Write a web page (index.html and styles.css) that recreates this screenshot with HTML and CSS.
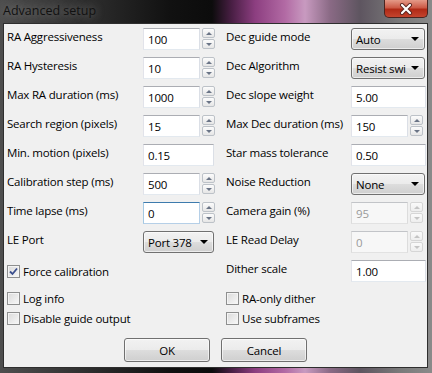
FILE: index.html
```html
<!DOCTYPE html>
<html lang="en">
<head>
    <meta charset="UTF-8">
    <title>Advanced setup</title>
    <link rel="stylesheet" href="styles.css">
</head>
<body>
    <div class="window">
        <div class="titlebar">
            <span class="title">Advanced setup</span>
            <div class="close-btn">
                <svg width="14" height="12" viewBox="0 0 14 12">
                    <path d="M3 2 L11 10 M11 2 L3 10" stroke="#5a2520" stroke-width="4" stroke-linecap="round"/>
                    <path d="M3 2 L11 10 M11 2 L3 10" stroke="#ffffff" stroke-width="2.2" stroke-linecap="round"/>
                </svg>
            </div>
        </div>
        <div class="client">
            <div class="form-grid">
                <label class="lbl">RA Aggressiveness</label>
                <div class="spin-field"><input class="textbox short" value="100"><span class="spinner"><span class="up"></span><span class="down"></span></span></div>
                <label class="lbl">Dec guide mode</label>
                <div class="combo"><span class="combo-text">Auto</span><span class="arrow"></span></div>

                <label class="lbl">RA Hysteresis</label>
                <div class="spin-field"><input class="textbox short" value="10"><span class="spinner"><span class="up"></span><span class="down"></span></span></div>
                <label class="lbl">Dec Algorithm</label>
                <div class="combo"><span class="combo-text">Resist swi</span><span class="arrow"></span></div>

                <label class="lbl">Max RA duration (ms)</label>
                <div class="spin-field"><input class="textbox short" value="1000"><span class="spinner"><span class="up"></span><span class="down"></span></span></div>
                <label class="lbl">Dec slope weight</label>
                <input class="textbox wide" value="5.00">

                <label class="lbl">Search region (pixels)</label>
                <div class="spin-field"><input class="textbox short" value="15"><span class="spinner"><span class="up"></span><span class="down"></span></span></div>
                <label class="lbl">Max Dec duration (ms)</label>
                <div class="spin-field"><input class="textbox short" value="150"><span class="spinner"><span class="up"></span><span class="down"></span></span></div>

                <label class="lbl">Min. motion (pixels)</label>
                <input class="textbox left-wide" value="0.15">
                <label class="lbl">Star mass tolerance</label>
                <input class="textbox wide" value="0.50">

                <label class="lbl">Calibration step (ms)</label>
                <div class="spin-field"><input class="textbox short" value="500"><span class="spinner"><span class="up"></span><span class="down"></span></span></div>
                <label class="lbl">Noise Reduction</label>
                <div class="combo"><span class="combo-text">None</span><span class="arrow"></span></div>

                <label class="lbl">Time lapse (ms)</label>
                <div class="spin-field"><input class="textbox short focused" value="0"><span class="spinner"><span class="up"></span><span class="down"></span></span></div>
                <label class="lbl">Camera gain (%)</label>
                <div class="spin-field"><input class="textbox short" value="95" disabled><span class="spinner disabled"><span class="up"></span><span class="down"></span></span></div>

                <label class="lbl">LE Port</label>
                <div class="combo left-combo"><span class="combo-text">Port 378</span><span class="arrow"></span></div>
                <label class="lbl">LE Read Delay</label>
                <div class="spin-field"><input class="textbox short" value="0" disabled><span class="spinner disabled"><span class="up"></span><span class="down"></span></span></div>

                <div class="check span2"><span class="box checked"><svg width="11" height="11" viewBox="0 0 11 11"><path d="M2 5.5 L4.5 8 L9 2.5" fill="none" stroke="#3b4f8e" stroke-width="1.8"/></svg></span>Force calibration</div>
                <label class="lbl">Dither scale</label>
                <input class="textbox wide" value="1.00">
            </div>

            <div class="check-grid">
                <div class="check span2"><span class="box"></span>Log info</div>
                <div class="check span2"><span class="box"></span>RA-only dither</div>
                <div class="check span2"><span class="box"></span>Disable guide output</div>
                <div class="check span2"><span class="box"></span>Use subframes</div>
            </div>

            <div class="buttons">
                <button class="btn">OK</button>
                <button class="btn">Cancel</button>
            </div>
        </div>
    </div>
</body>
</html>
```

FILE: styles.css
```css
body {
    margin: 0;
    width: 432px;
    height: 373px;
    overflow: hidden;
    font-family: "Open Sans", "Noto Sans", sans-serif;
    font-size: 11.5px;
    letter-spacing: -0.2px;
    color: #000;
    background: linear-gradient(to right, #4e4e4e 0px, #3c3c3c 50px, #262626 110px, #111 170px, #0c0c0c 212px, #4a1f45 232px, #8c3e80 255px, #b26aa4 285px, #c89ac0 305px, #8a6a85 330px, #5e5560 360px, #7a7a7a 400px, #8a8a8a 432px);
}
.window {
    display: flex;
    flex-direction: column;
    height: 373px;
    padding: 0 4px 5px 3px;
    box-sizing: border-box;
}
.titlebar {
    height: 23px;
    display: flex;
    justify-content: space-between;
    align-items: flex-start;
}
.title {
    margin-top: 2px;
    font-size: 12.5px;
    line-height: 17px;
    letter-spacing: 0;
    color: #111;
    text-shadow: 0 0 8px rgba(200, 200, 200, 0.55);
}
.close-btn {
    width: 44px;
    height: 18px;
    box-sizing: border-box;
    border: 1px solid #4a2420;
    border-top: none;
    border-radius: 0 0 5px 5px;
    background: linear-gradient(#e49a88 0%, #cc5a46 45%, #b02a16 55%, #c4442e 100%);
    display: flex;
    align-items: center;
    justify-content: center;
}
.client {
    flex: 1;
    background: #f0f0f0;
    border: 1px solid #2e2e2e;
    padding: 4px 3px 0 3px;
}
.form-grid, .check-grid {
    display: grid;
    grid-template-columns: 136px 83px 125px 75px;
}
.form-grid {
    grid-auto-rows: 22px;
    row-gap: 7px;
}
.check-grid {
    grid-auto-rows: 20px;
    margin-top: 6px;
}
.lbl {
    line-height: 18px;
    white-space: nowrap;
}
.span2 {
    grid-column: span 2;
}
.textbox {
    height: 22px;
    box-sizing: border-box;
    margin: 0;
    padding: 0 4px;
    border: 1px solid;
    border-color: #abadb3 #dbdfe6 #e3e9ef #e2e3ea;
    background: #fff;
    font-family: inherit;
    font-size: inherit;
    letter-spacing: inherit;
    color: #000;
    outline: none;
}
.textbox.short {
    width: 57px;
}
.textbox.wide {
    width: 75px;
}
.textbox.left-wide {
    width: 71px;
}
.textbox.focused {
    border-color: #3d7bad #b5cfe7 #b5cfe7 #a4c9e3;
}
.textbox:disabled {
    background: #f7f7f7;
    color: #9a9a9a;
    border-color: #c2c4c8 #dcdcdc #e2e2e2 #dcdcdc;
}
.spin-field {
    display: flex;
    gap: 2px;
}
.spinner {
    display: flex;
    flex-direction: column;
    gap: 1px;
    width: 13px;
}
.spinner span {
    height: 10px;
    box-sizing: border-box;
    border: 1px solid #bdc2c8;
    border-radius: 2px;
    background: linear-gradient(#fcfcfc, #e6e6e6);
    display: flex;
    align-items: center;
    justify-content: center;
}
.spinner span::after {
    content: "";
    border-left: 3px solid transparent;
    border-right: 3px solid transparent;
}
.spinner .up::after {
    border-bottom: 3px solid #6a7486;
}
.spinner .down::after {
    border-top: 3px solid #6a7486;
}
.spinner.disabled span {
    border-color: #d6d6d6;
    background: linear-gradient(#fafafa, #eeeeee);
}
.spinner.disabled .up::after {
    border-bottom-color: #c4c4c4;
}
.spinner.disabled .down::after {
    border-top-color: #c4c4c4;
}
.combo, .btn {
    box-sizing: border-box;
    border: 1px solid #707070;
    border-radius: 3px;
    background: linear-gradient(#f2f2f2 0%, #ebebeb 50%, #dddddd 50%, #cfcfcf 100%);
    box-shadow: inset 0 0 0 1px rgba(255, 255, 255, 0.6);
}
.combo {
    width: 74px;
    height: 22px;
    display: flex;
    align-items: center;
    padding: 0 5px 0 4px;
}
.combo.left-combo {
    width: 71px;
}
.combo-text {
    flex: 1;
    white-space: nowrap;
}
.arrow {
    margin-left: 3px;
    border-left: 4px solid transparent;
    border-right: 4px solid transparent;
    border-top: 4px solid #000;
}
.check {
    display: flex;
    align-items: center;
    gap: 3px;
    white-space: nowrap;
}
.box {
    width: 13px;
    height: 13px;
    box-sizing: border-box;
    border: 1px solid #8e8f8f;
    background: linear-gradient(135deg, #dadada, #f8f8f8);
    box-shadow: inset 0 0 0 1px #f4f4f4;
    display: flex;
    align-items: center;
    justify-content: center;
}
.buttons {
    display: flex;
    justify-content: center;
    gap: 11px;
    margin-top: 10px;
}
.btn {
    width: 86px;
    height: 24px;
    font-family: inherit;
    font-size: inherit;
    letter-spacing: inherit;
    color: #000;
    padding: 0;
}
```
